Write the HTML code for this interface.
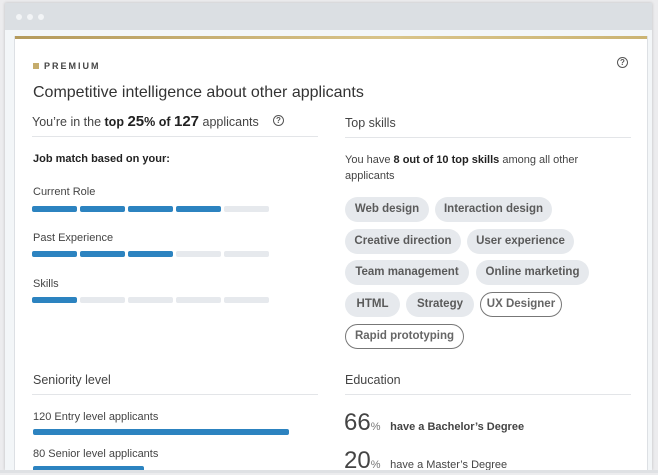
<!DOCTYPE html>
<html><head><meta charset="utf-8"><style>
*{margin:0;padding:0;box-sizing:border-box}
body{width:658px;height:473px;overflow:hidden;background:#ececee;font-family:"Liberation Sans",sans-serif;color:#333;position:relative}
.win{position:absolute;left:5px;top:3px;width:647px;height:467px;background:#f3f6f8;box-shadow:0 0 3px rgba(0,0,0,.2);overflow:hidden}
.bar{position:absolute;left:0;top:0;width:100%;height:27px;background:#dbdfe3}
.dot{position:absolute;top:11px;width:6px;height:6px;border-radius:50%;background:#f2f4f6}
.card{position:absolute;left:9px;top:33px;width:634px;height:440px;background:#fff;border:1px solid #dde0e4;border-top:none}
.gold{position:absolute;left:0;top:0;width:100%;height:3px;background:linear-gradient(90deg,#b49a5c,#d9c48a 60%,#cbb474)}
.a{position:absolute;white-space:nowrap}
.seg{position:absolute;height:6px;width:45px;border-radius:2px;background:#e6e9ed}
.seg.b{background:#2c83c0}
.hr{position:absolute;height:1px;background:#e3e5e8}
.pill{position:absolute;height:25px;border-radius:13px;background:#e6e9ed;font-size:11.5px;font-weight:bold;color:#5a5a5a;line-height:25px;text-align:center}
.pill.o{background:#fff;border:1px solid #777;line-height:23px;color:#666}
.q{position:absolute;width:11px;height:11px;border:1.3px solid #555;border-radius:50%;font-size:8px;line-height:9px;text-align:center;color:#555;font-weight:bold}
</style></head><body>
<div class="win">
<div class="bar"></div>
<div class="dot" style="left:11px"></div><div class="dot" style="left:22px"></div><div class="dot" style="left:33px"></div>
<div class="card"><div class="gold"></div></div>
</div>
<div class="a" style="left:33px;top:63px;width:6px;height:6px;background:#c5ac6c"></div>
<div class="a" style="left:44px;top:61px;font-size:9px;letter-spacing:2px;font-weight:bold;color:#444">PREMIUM</div>
<div class="q" style="left:617px;top:57px">?</div>
<div class="a" style="left:33px;top:84px;font-size:16px;color:#333">Competitive intelligence about other applicants</div>
<div class="a" style="left:32px;top:113px;font-size:12.5px;color:#444">You’re in the <b style="color:#222">top <span style="font-size:15px">25</span>% of <span style="font-size:15px">127</span></b> applicants</div>
<div class="q" style="left:273px;top:115px">?</div>
<div class="hr" style="left:32px;top:136px;width:286px"></div>
<div class="a" style="left:33px;top:153px;font-size:11px;font-weight:bold;color:#222">Job match based on your:</div>
<div class="a" style="left:33px;top:186px;font-size:11px;color:#444">Current Role</div>
<div class="seg b" style="left:32px;top:206px"></div><div class="seg b" style="left:80px;top:206px"></div><div class="seg b" style="left:128px;top:206px"></div><div class="seg b" style="left:176px;top:206px"></div><div class="seg" style="left:224px;top:206px"></div>
<div class="a" style="left:33px;top:232px;font-size:11px;color:#444">Past Experience</div>
<div class="seg b" style="left:32px;top:251px"></div><div class="seg b" style="left:80px;top:251px"></div><div class="seg b" style="left:128px;top:251px"></div><div class="seg" style="left:176px;top:251px"></div><div class="seg" style="left:224px;top:251px"></div>
<div class="a" style="left:33px;top:278px;font-size:11px;color:#444">Skills</div>
<div class="seg b" style="left:32px;top:297px"></div><div class="seg" style="left:80px;top:297px"></div><div class="seg" style="left:128px;top:297px"></div><div class="seg" style="left:176px;top:297px"></div><div class="seg" style="left:224px;top:297px"></div>

<div class="a" style="left:345px;top:116px;font-size:12.5px;color:#444">Top skills</div>
<div class="hr" style="left:345px;top:137px;width:286px"></div>
<div class="a" style="left:345px;top:152px;font-size:11px;color:#444;line-height:16px">You have <b style="color:#222">8 out of 10 top skills</b> among all other<br>applicants</div>
<div class="pill" style="left:345px;top:197px;width:84px">Web design</div>
<div class="pill" style="left:435px;top:197px;width:117px">Interaction design</div>
<div class="pill" style="left:345px;top:229px;width:116px">Creative direction</div>
<div class="pill" style="left:467px;top:229px;width:107px">User experience</div>
<div class="pill" style="left:345px;top:260px;width:124px">Team management</div>
<div class="pill" style="left:476px;top:260px;width:113px">Online marketing</div>
<div class="pill" style="left:345px;top:292px;width:55px">HTML</div>
<div class="pill" style="left:406px;top:292px;width:68px">Strategy</div>
<div class="pill o" style="left:480px;top:292px;width:82px">UX Designer</div>
<div class="pill o" style="left:345px;top:324px;width:119px">Rapid prototyping</div>

<div class="a" style="left:33px;top:373px;font-size:12.5px;color:#444">Seniority level</div>
<div class="hr" style="left:32px;top:394px;width:286px"></div>
<div class="a" style="left:33px;top:411px;font-size:11px;color:#444">120 Entry level applicants</div>
<div class="a" style="left:33px;top:429px;width:256px;height:6px;border-radius:2px;background:#2c83c0"></div>
<div class="a" style="left:33px;top:448px;font-size:11px;color:#444">80 Senior level applicants</div>
<div class="a" style="left:33px;top:466px;width:111px;height:6px;border-radius:2px;background:#2c83c0"></div>

<div class="a" style="left:345px;top:373px;font-size:12.5px;color:#444">Education</div>
<div class="hr" style="left:345px;top:394px;width:286px"></div>
<div class="a" style="left:344px;top:409px;font-size:24px;color:#444">66<span style="font-size:11px;color:#777">%</span> <span style="font-size:11px;font-weight:bold;color:#444;margin-left:3px">have a Bachelor’s Degree</span></div>
<div class="a" style="left:344px;top:447px;font-size:24px;color:#444">20<span style="font-size:11px;color:#777">%</span> <span style="font-size:11px;color:#444;margin-left:3px">have a Master’s Degree</span></div>
<div class="a" style="left:0;top:470px;width:658px;height:3px;background:#dfe1e4"></div>
</body></html>
